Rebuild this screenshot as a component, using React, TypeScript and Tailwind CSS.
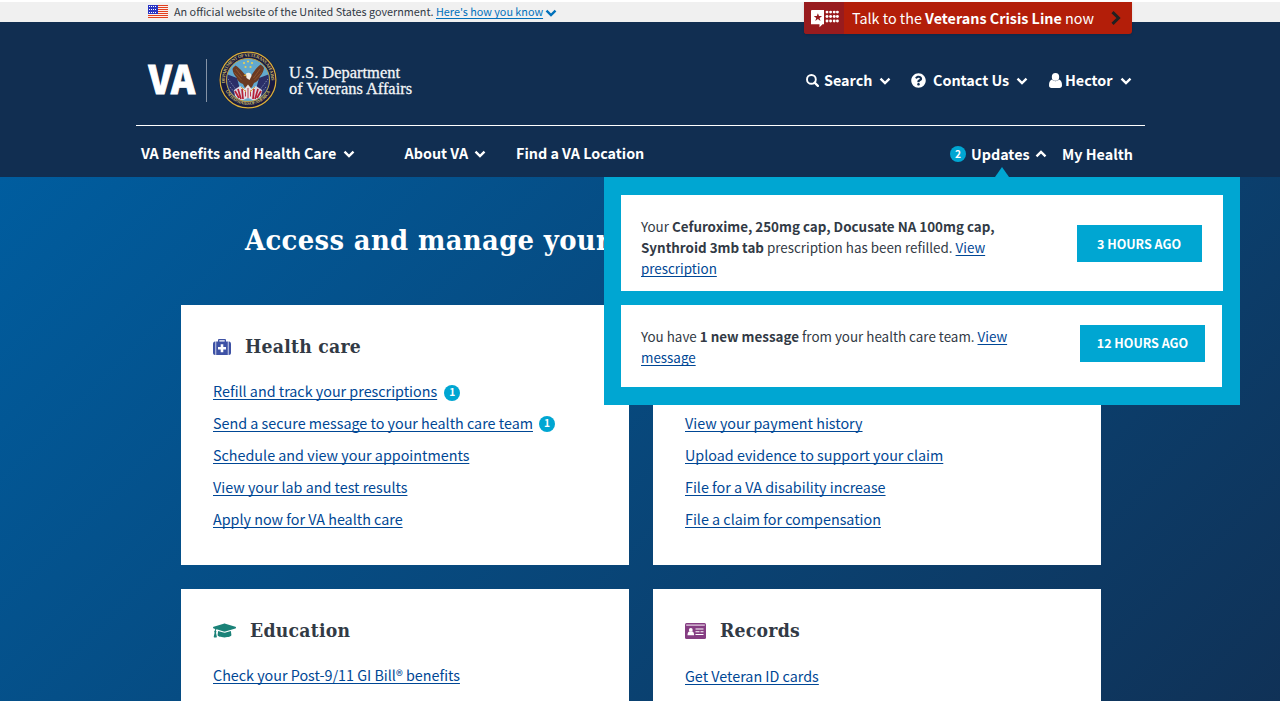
import type { ReactNode } from 'react';
import { FaQuestionCircle, FaGraduationCap } from 'react-icons/fa';

const SANS = "font-['Noto_Sans_CJK_SC','Noto_Sans',sans-serif]";
const SLAB = "font-['DejaVu_Serif_Condensed','DejaVu_Serif',serif] font-bold [font-stretch:condensed]";

function Chevron({ up = false, className = '' }: { up?: boolean; className?: string }) {
  return (
    <svg viewBox="0 0 12 8" className={`h-2 w-3 shrink-0 ${up ? 'rotate-180' : ''} ${className}`} fill="none" stroke="currentColor" strokeWidth="2.4">
      <path d="M1.5 1.600 6 6l4.500-4.400" />
    </svg>
  );
}

function Flag() {
  return (
    <svg viewBox="0 0 20 14" className="h-[14px] w-5 shrink-0" shapeRendering="crispEdges">
      <rect width="20" height="14" fill="#fbeeea" />
      {[0, 2, 4, 6, 8, 10, 12].map((y) => (
        <rect key={y} y={y} width="20" height="1" fill="#e2401f" />
      ))}
      <rect width="10" height="9" fill="#2a36c4" />
      {[1.5, 4.5, 7.5].map((y) => (
        <path key={y} d={`M1 ${y}h8`} stroke="#fff" strokeWidth="1" strokeDasharray="1 1" />
      ))}
    </svg>
  );
}

function SearchIcon() {
  return (
    <svg viewBox="0 0 13 13" className="h-[13px] w-[13px] shrink-0" fill="none" stroke="currentColor">
      <circle cx="5.400" cy="5.400" r="4.400" strokeWidth="1.900" />
      <path d="M8.600 8.600l3.300 3.300" strokeWidth="2.200" strokeLinecap="round" />
    </svg>
  );
}

function Seal() {
  return (
    <svg viewBox="0 0 58 58" className="h-[58px] w-[58px] shrink-0">
      <defs>
        <path id="ringTop" d="M6.2 33a23.2 23.2 0 1 1 45.6 0" />
        <path id="ringBottom" d="M5.2 37a25.2 25.2 0 0 0 47.6 0" />
        <clipPath id="disc"><circle cx="29" cy="29" r="21" /></clipPath>
      </defs>
      <circle cx="29" cy="29" r="28.900" fill="#1a1838" />
      <circle cx="29" cy="29" r="27.900" fill="#171a42" stroke="#d9b13b" strokeWidth="1.200" />
      <circle cx="29" cy="29" r="21.600" fill="#62a9cf" stroke="#c8a53c" strokeWidth="0.900" />
      <g fill="#cdb968" fontFamily="Liberation Serif, serif" fontWeight="700" fontSize="4.600">
        <text><textPath href="#ringTop" startOffset="1" textLength="77">DEPARTMENT OF VETERANS AFFAIRS</textPath></text>
        <text><textPath href="#ringBottom" startOffset="3" textLength="55">UNITED STATES OF AMERICA</textPath></text>
      </g>
      <g clipPath="url(#disc)">
        <path d="M7 23l11 4 4 15-8 6C9 44 6 32 7 23zM51 23l-11 4-4 15 8 6c5-4 8-16 7-25z" fill="#2b2f68" />
        <path d="M9 28l9 12M11 36l6 7M49 28l-9 12M47 36l-6 7" stroke="#9db0cf" strokeWidth="0.900" strokeDasharray="1 1.400" />
        <path d="M15 39l6-4 8 5 8-5 6 4-1 6-6 5-7-3-7 3-6-5z" fill="#dcd6e2" />
        <path d="M16 40l4 7M19 38l3 10M23 38l1 10M42 40l-4 7M39 38l-3 10M35 38l-1 10" stroke="#b52036" strokeWidth="1.700" />
      </g>
      <g fill="#e9cf55">
        <circle cx="29" cy="10.500" r="1.100" /><circle cx="25" cy="12" r="1.100" /><circle cx="33" cy="12" r="1.100" />
        <circle cx="26.500" cy="16" r="1.100" /><circle cx="31.500" cy="16" r="1.100" />
      </g>
      <path d="M27 24c-3-2-5-6-10.500-9.500-1.500 1.500-2.500 2-3 3.500.3 3 1.500 6 4 8.500 1 3 3 5.500 6.500 6.500l2 4 3 3 4-4 2-4c3-1 5-3.500 6-6.500 2-2 3.500-5 4-8.500-.8-1.500-2-2.500-3.500-3.500C36.500 17 34.500 22 32 25z" fill="#6b3a22" />
      <path d="M17 18l6 8M15.500 21.500l7 7.500M41 18l-6.500 9M42.500 21.500l-7 7.500" stroke="#91562f" strokeWidth="0.900" />
      <path d="M27 22.500c2.500-1.500 5.500-.5 5.500 2.500l-2 4-3-2z" fill="#f3efe6" />
      <path d="M26.800 23l-2.400 1.500 2.600.8z" fill="#e3b02e" />
      <path d="M25 38.500l4-5 4 5-1 8.500h-6z" fill="#e9e2e4" />
      <path d="M26.500 39.500v6M29 37v10M31.500 39.500v6" stroke="#b52036" strokeWidth="0.900" />
      <path d="M22 36l5 5M36 36l-5 5" stroke="#d9a938" strokeWidth="1" />
    </svg>
  );
}

function Logo() {
  return (
    <div className="flex h-[58px] items-center">
      <svg viewBox="0 0 58 58" className="h-[58px] w-[58px] shrink-0 overflow-visible">
        <text x="0.400" y="42.600" textLength="46.700" lengthAdjust="spacingAndGlyphs" fontFamily="Noto Sans CJK SC, sans-serif" fontWeight="900" fontSize="38.800" fill="#fff" stroke="#fff" strokeWidth="0.900">VA</text>
      </svg>
      <div className="h-[43px] w-px bg-[#8593a6]" />
      <div className="ml-3"><Seal /></div>
      <svg viewBox="0 0 130 58" className="ml-3 h-[58px] w-[130px] overflow-visible" fill="#f4f6f8" stroke="#f4f6f8" strokeWidth="0.300" fontFamily="Liberation Serif, serif" fontSize="17.500">
        <text x="0" y="26.500" textLength="111" lengthAdjust="spacingAndGlyphs">U.S. Department</text>
        <text x="0" y="42.500" textLength="123" lengthAdjust="spacingAndGlyphs">of Veterans Affairs</text>
      </svg>
    </div>
  );
}

function CrisisIcon() {
  return (
    <svg viewBox="0 0 28 18" className="h-[18px] w-7" fill="#fff">
      <path fillRule="evenodd" d="M1 0h12v14.200h-1.500l-3 3V14.200H0V1a1 1 0 0 1 1-1zm5.900 3.200L5.800 6H2.700l2.500 1.900-.9 3 2.600-1.800 2.600 1.800-.9-3L11.100 6H8z" />
      {[2.1, 6.500, 11].map((y) => [16, 19.600, 23.200, 26.400].map((x) => <circle key={`${x}-${y}`} cx={x} cy={y} r="1.450" />))}
    </svg>
  );
}

function PersonIcon() {
  return (
    <svg viewBox="0 0 13 15" className="h-[15px] w-[13px] shrink-0" fill="currentColor">
      <ellipse cx="6.500" cy="3.900" rx="3.700" ry="3.900" />
      <path d="M3 6.600C1 7.100 0 9.300 0 12.200 0 14 1 15 2.500 15h8c1.500 0 2.500-1 2.500-2.800 0-2.900-1-5.100-3-5.600-1 1.200-2.200 1.700-3.500 1.700S4 7.800 3 6.600z" />
    </svg>
  );
}

function MedkitIcon() {
  return (
    <svg viewBox="0 0 18 16" className="h-4 w-[18px] shrink-0" fill="#3e52a5">
      <path d="M0 5.200C0 3.500.8 2.600 2 2.500V16c-1.200 0-2-.8-2-2.200zM18 5.200c0-1.700-.8-2.600-2-2.700V16c1.200 0 2-.8 2-2.200z" />
      <path d="M2 2.500h1.200V16H2zM14.800 2.500H16V16h-1.200z" opacity="0.450" />
      <path fillRule="evenodd" d="M3.200 2.500H5V1.200C5 .5 5.500 0 6.200 0h5.600c.7 0 1.200.5 1.200 1.200v1.300h1.800V16H3.200zM6.300 1.200v1.300h5.400V1.200zM7.700 5.200v2.700H5v2.600h2.700v2.700h2.600v-2.700H13V7.900h-2.700V5.200z" />
    </svg>
  );
}

function IdIcon() {
  return (
    <svg viewBox="0 0 21 16" className="h-4 w-[21px] shrink-0">
      <rect width="21" height="16" rx="1.500" fill="#853d82" />
      <path d="M1.200 2.100h18.600" stroke="#f1e6f0" strokeWidth="1.100" />
      <path d="M10.500 6h8M10.500 8.700h4m1 0h3M10.500 11.500h8" stroke="#fff" strokeWidth="1.100" />
      <circle cx="5.800" cy="6.900" r="1.900" fill="#fff" />
      <path d="M2.500 12.200c0-2.300.8-3.600 2-3.700h2.600c1.200.1 2 1.400 2 3.700z" fill="#fff" />
    </svg>
  );
}

function Count({ n, className = '' }: { n: number; className?: string }) {
  return (
    <span className={`flex h-4 w-4 shrink-0 items-center justify-center rounded-full bg-[#00a6d2] text-[10.2px] leading-none font-bold text-white ${className}`}>
      {n}
    </span>
  );
}

function LinkRow({ children, badge }: { children: ReactNode; badge?: ReactNode }) {
  return (
    <li className="flex h-8 items-center">
      <a className="text-[14.34px] leading-8 whitespace-nowrap text-[#004795] underline decoration-1 underline-offset-2 [text-decoration-skip-ink:none]">{children}</a>
      {badge}
    </li>
  );
}

function Card({ icon, title, children, className }: { icon?: ReactNode; title?: string; children: ReactNode; className: string }) {
  return (
    <section className={`w-[448px] bg-white px-8 ${className}`}>
      <div className="flex h-[29px] items-center text-[#323a45]">
        {icon}
        {title && <h2 className={`${SLAB} h-[29px] text-[19.2px] leading-[29px] tracking-[0.25px] whitespace-nowrap`}>{title}</h2>}
      </div>
      {children}
    </section>
  );
}

function Update({ children, when, box, button }: { children: ReactNode; when: string; box: string; button: string }) {
  return (
    <article className={`flex justify-between bg-white pl-5 ${box}`}>
      <p className="w-[375px] text-[13.4px] leading-[21px] text-[#323a45]">{children}</p>
      <div className={`flex h-[37px] w-[125px] shrink-0 items-center justify-center bg-[#00a6d2] text-[12.5px] leading-5 font-bold whitespace-nowrap text-white ${button}`}>{when}</div>
    </article>
  );
}

const updateLink = 'text-[#004795] underline decoration-1 underline-offset-2 [text-decoration-skip-ink:none]';

export default function App() {
  return (
    <div className={`relative flex h-[701px] w-[1280px] flex-col overflow-hidden bg-white pt-0.5 ${SANS}`}>
      <div className="flex h-5 shrink-0 items-center bg-[#f0f0f0] pl-[148px] text-[#323a45]">
        <Flag />
        <span className="-mt-0.5 ml-1.5 w-[262px] text-[10.82px] leading-5 whitespace-nowrap">An official website of the United States government.</span>
        <a className="-mt-0.5 w-[107px] text-[10.8px] leading-5 whitespace-nowrap text-[#0071bb] underline underline-offset-2 [text-decoration-skip-ink:none]">Here's how you know</a>
        <Chevron className="ml-0.5 mt-0.5 text-[#0071bb]" />
      </div>

      <header className="h-[155px] shrink-0 bg-[#112e51] px-[136px] text-white">
        <div className="flex h-[104px] w-[1009px] items-start justify-between border-b border-white pl-3 pt-[29px]">
          <Logo />
          <div className="mr-[13px] mt-[17px] flex h-6 items-center text-[14.35px] font-bold whitespace-nowrap">
            <SearchIcon />
            <span className="ml-[5px] w-[48px]">Search</span>
            <Chevron className="ml-[7px] mt-0.5" />
            <FaQuestionCircle className="ml-5 h-[15px] w-[15px]" />
            <span className="ml-[7px] w-[76px]">Contact Us</span>
            <Chevron className="ml-[7px] mt-0.5" />
            <span className="ml-[21px]"><PersonIcon /></span>
            <span className="ml-[3px] w-[48px]">Hector</span>
            <Chevron className="ml-[7px] mt-0.5" />
          </div>
        </div>
        <nav className="flex h-[51px] w-[1009px] items-center pl-[5px] pt-[3px] text-[14.34px] font-bold whitespace-nowrap">
          <span className="w-[195px]">VA Benefits and Health Care</span>
          <Chevron className="ml-[7px] mt-0.5" />
          <span className="ml-[49px] w-[64px] pl-[0.5px]">About VA</span>
          <Chevron className="ml-1.5 mt-0.5" />
          <span className="ml-[30px] w-[128px]">Find a VA Location</span>
          <Count n={2} className="ml-[306px] mt-0.5" />
          <span className="ml-[5px] mt-0.5 w-[58px]">Updates</span>
          <Chevron up className="ml-1.5 mt-0.5" />
          <span className="ml-[15px] mt-0.5">My Health</span>
        </nav>
      </header>

      <main className="flex min-h-0 flex-1 flex-col bg-[linear-gradient(135deg,#005d9f_0%,#112e51_108%)] pl-[181px]">
        <h1 className={`${SLAB} h-32 shrink-0 pl-16 pt-[43px] text-[28.8px] leading-10 tracking-[0.35px] whitespace-nowrap text-white`}>Access and manage your</h1>
        <div className="grid grid-cols-[448px_448px] gap-6">
          <Card className="h-[260px] pt-[27px]" icon={<span className="mr-3.5"><MedkitIcon /></span>} title="Health care">
            <ul className="pt-3.5">
              <LinkRow badge={<Count n={1} className="ml-[7px] mt-[3px]" />}>Refill and track your prescriptions</LinkRow>
              <LinkRow badge={<Count n={1} className="ml-1.5 mt-px" />}>Send a secure message to your health care team</LinkRow>
              <LinkRow>Schedule and view your appointments</LinkRow>
              <LinkRow>View your lab and test results</LinkRow>
              <LinkRow>Apply now for VA health care</LinkRow>
            </ul>
          </Card>
          <Card className="h-[260px] pt-[27px]">
            <ul className="pt-[46px]">
              <LinkRow>View your payment history</LinkRow>
              <LinkRow>Upload evidence to support your claim</LinkRow>
              <LinkRow>File for a VA disability increase</LinkRow>
              <LinkRow>File a claim for compensation</LinkRow>
            </ul>
          </Card>
          <Card className="h-[260px] pt-[27px]" icon={<FaGraduationCap className="mr-3.5 h-[19px] w-[23px] text-[#1b8278]" />} title="Education">
            <ul className="pt-3.5">
              <LinkRow>Check your Post-9/11 GI Bill® benefits</LinkRow>
            </ul>
          </Card>
          <Card className="h-[260px] pt-[27px]" icon={<span className="mr-3.5"><IdIcon /></span>} title="Records">
            <ul className="pt-[15px]">
              <LinkRow>Get Veteran ID cards</LinkRow>
            </ul>
          </Card>
        </div>
      </main>

      <a className="absolute left-[804px] top-0.5 flex h-8 w-[328px] items-center overflow-hidden rounded-b-[3px] bg-[#b31e09] text-white shadow-sm">
        <span className="flex h-8 w-10 items-center justify-center bg-[#981b1e] pl-px pt-px"><CrisisIcon /></span>
        <span className="ml-2 w-[242px] text-[14.35px] leading-8 whitespace-nowrap">
          Talk to the <b>Veterans Crisis Line</b> now
        </span>
        <svg viewBox="0 0 10 14" className="ml-[17px] h-3.5 w-2.5" fill="none" stroke="#212121" strokeWidth="3">
          <path d="M1.500 1.200 7.500 7l-6 5.800" />
        </svg>
      </a>

      <aside className="absolute left-[604px] top-[177px] flex h-[228px] w-[636px] flex-col gap-3.5 bg-[#00a6d2] pl-[17px] pt-[18px]">
        <svg viewBox="0 0 14 10" className="absolute -top-2.5 left-[391px] h-2.5 w-3.5" fill="#00a6d2"><path d="M7 0l7 10H0z" /></svg>
        <Update when="3 HOURS AGO" box="h-24 w-[602px] pt-[21px] pr-[21px]" button="mt-[9px] pr-px">
          Your <b>Cefuroxime, 250mg cap, Docusate NA 100mg cap, Synthroid 3mb tab</b> prescription has been refilled. <a className={updateLink}>View prescription</a>
        </Update>
        <Update when="12 HOURS AGO" box="h-[82px] w-[601px] pt-[21px] pr-[17px]" button="-mt-px pb-0.5">
          You have <b>1 new message</b> from your health care team. <a className={updateLink}>View message</a>
        </Update>
      </aside>
    </div>
  );
}
